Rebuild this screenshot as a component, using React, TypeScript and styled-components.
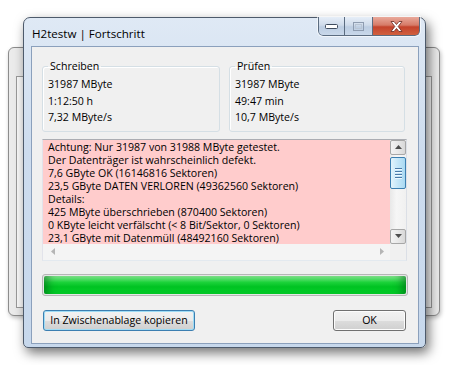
import styled, { createGlobalStyle } from "styled-components";

const Global = createGlobalStyle`
	html, body {
		margin: 0;
		background: #ffffff;
	}
	body {
		width: 454px;
		height: 365px;
		overflow: hidden;
		font-family: "Open Sans", "Noto Sans", sans-serif;
		font-size: 10.6px;
		color: #000;
	}
`;

const Desktop = styled.div`
	position: relative;
	width: 454px;
	height: 365px;
`;

// window of the main app, sits behind the dialog
const BackWindow = styled.div`
	position: absolute;
	left: 8px;
	top: 47px;
	width: 432px;
	height: 269px;
	box-sizing: border-box;
	border: 1px solid #8c8c8c;
	border-radius: 6px;
	background: #ebebeb;
	padding: 28px 7px 7px;
	box-shadow: 1px 2px 4px rgba(0, 0, 0, 0.25);
`;

const BackClient = styled.div`
	height: 100%;
	box-sizing: border-box;
	border: 1px solid #9a9a9a;
	background: #fafafa;
`;

const Window = styled.div`
	position: absolute;
	left: 23px;
	top: 17px;
	width: 403px;
	height: 331px;
	box-sizing: border-box;
	display: flex;
	flex-direction: column;
	border: 1px solid #4d5a6b;
	border-radius: 7px 7px 5px 5px;
	background: linear-gradient(#dfe9f5, #cddcee 40%, #c7d8ec);
	padding: 0 6px 6px 7px;
	box-shadow: 3px 5px 12px rgba(0, 0, 0, 0.55);
`;

const TitleBar = styled.div`
	position: relative;
	height: 28px;
	flex: none;
	display: flex;
	align-items: center;
	padding: 3px 0 0 1px;
	box-sizing: border-box;
	font-size: 11.6px;
	color: #000;
`;

const Caption = styled.div`
	display: flex;
	position: absolute;
	right: -1px;
	top: -1px;
	height: 19px;
	border-radius: 0 0 5px 5px;
	box-shadow: 0 0 0 1px rgba(255, 255, 255, 0.6);
	overflow: hidden;
`;

const CaptionButton = styled.div<{ $w: number; $close?: boolean }>`
	width: ${(p) => p.$w}px;
	height: 100%;
	box-sizing: border-box;
	display: flex;
	align-items: center;
	justify-content: center;
	border: 1px solid #5b6c80;
	border-top: none;
	margin-left: -1px;
	background: ${(p) =>
		p.$close
			? "linear-gradient(#e9a99b, #d67b68 45%, #c4432c 55%, #d0603f)"
			: "linear-gradient(#e6eef8, #cfdbea 45%, #bccde2 55%, #c9d8ea)"};
	&:first-child {
		border-bottom-left-radius: 5px;
		margin-left: 0;
	}
	&:last-child {
		border-bottom-right-radius: 5px;
	}
`;

const Client = styled.div`
	flex: 1;
	display: flex;
	flex-direction: column;
	box-sizing: border-box;
	border: 1px solid #8ba0bc;
	background: #f0f0f0;
	padding: 12px 11px 12px 10px;
`;

const Groups = styled.div`
	display: grid;
	grid-template-columns: 178px 176px;
	column-gap: 9px;
`;

const Group = styled.fieldset`
	margin: 0;
	padding: 2px 5px 5px;
	border: 1px solid #d5dfe5;
	border-radius: 3px;
	box-shadow: inset 1px 1px 0 #fff;
	min-width: 0;
`;

const Legend = styled.legend`
	padding: 0 2px;
	margin-left: 0;
	line-height: 15px;
`;

const Value = styled.div`
	line-height: 16.5px;
	white-space: nowrap;
`;

const LogBox = styled.div`
	margin-top: 7px;
	height: 122px;
	box-sizing: border-box;
	display: grid;
	grid-template-columns: 1fr 16px;
	grid-template-rows: 1fr 16px;
	border: 1px solid #abadb3;
	border-color: #abadb3 #dbdfe6 #e3e9ef #e2e3ea;
	background: #ffcccc;
`;

const LogText = styled.div`
	padding: 1px 0 0 5px;
	line-height: 13px;
	white-space: nowrap;
	overflow: hidden;
`;

const VScroll = styled.div`
	display: flex;
	flex-direction: column;
	background: linear-gradient(90deg, #e8e8e8, #f6f6f6 40%, #f0f0f0);
`;

const HScroll = styled.div`
	grid-column: 1 / 2;
	display: flex;
	align-items: center;
	justify-content: space-between;
	padding: 0 6px 0 8px;
	background: #f4f4f4;
`;

const Corner = styled.div`
	background: #f0f0f0;
`;

const ArrowButton = styled.div`
	height: 15px;
	flex: none;
	box-sizing: border-box;
	display: flex;
	align-items: center;
	justify-content: center;
	border: 1px solid #a7a7a7;
	border-radius: 2px;
	background: linear-gradient(90deg, #f3f3f3, #e8e8e8 50%, #d8d8d8);
`;

const Thumb = styled.div`
	margin-top: 2px;
	height: 32px;
	box-sizing: border-box;
	display: flex;
	flex-direction: column;
	align-items: center;
	justify-content: center;
	gap: 2px;
	border: 1px solid #3c7fb1;
	border-radius: 2px;
	background: linear-gradient(90deg, #e3f4fc, #c4e6f8 50%, #a9d9f2);
`;

const Grip = styled.div`
	width: 7px;
	height: 1px;
	background: #4a7aa8;
	box-shadow: 0 1px 0 #eef8ff;
`;

const Track = styled.div`
	flex: 1;
`;

const Progress = styled.div`
	margin-top: 13px;
	margin-right: -1px;
	height: 22px;
	box-sizing: border-box;
	border: 1px solid #b6b6b6;
	border-radius: 3px;
	padding: 1px;
	background: #e6e6e6;
`;

const ProgressFill = styled.div`
	height: 100%;
	border-radius: 2px;
	background: linear-gradient(#86e892, #1cd23a 35%, #00c322 60%, #05d02a);
	box-shadow: inset 10px 0 8px -6px rgba(0, 90, 20, 0.55),
		inset -10px 0 8px -6px rgba(0, 90, 20, 0.55);
`;

const ButtonRow = styled.div`
	margin-top: 14px;
	display: flex;
	justify-content: space-between;
	padding: 0 1px;
`;

const Button = styled.button<{ $focused?: boolean; $w: number }>`
	width: ${(p) => p.$w}px;
	height: 21px;
	padding: 0;
	font-family: inherit;
	font-size: 10.6px;
	color: #000;
	white-space: nowrap;
	border: 1px solid ${(p) => (p.$focused ? "#3c7fb1" : "#707070")};
	border-radius: 3px;
	background: linear-gradient(#f2f2f2, #ebebeb 50%, #dddddd 50%, #cfcfcf);
	box-shadow: inset 0 0 0 1px ${(p) => (p.$focused ? "#9fdcf5" : "#fcfcfc")};
`;

const Tri = ({ dir }: { dir: "up" | "down" | "left" | "right" }) => {
	const pts = {
		up: "0,4 7,4 3.5,0",
		down: "0,0 7,0 3.5,4",
		left: "4,0 4,7 0,3.5",
		right: "0,0 0,7 4,3.5",
	}[dir];
	const vertical = dir === "up" || dir === "down";
	return (
		<svg width={vertical ? 7 : 4} height={vertical ? 4 : 7}>
			<polygon points={pts} fill={vertical ? "#4d4d4d" : "#b5b5b5"} />
		</svg>
	);
};

const LOG_LINES = [
	"Achtung: Nur 31987 von 31988 MByte getestet.",
	"Der Datenträger ist wahrscheinlich defekt.",
	"7,6 GByte OK (16146816 Sektoren)",
	"23,5 GByte DATEN VERLOREN (49362560 Sektoren)",
	"Details:",
	"425 MByte überschrieben (870400 Sektoren)",
	"0 KByte leicht verfälscht (< 8 Bit/Sektor, 0 Sektoren)",
	"23,1 GByte mit Datenmüll (48492160 Sektoren)",
];

export default function App() {
	return (
		<Desktop>
			<Global />
			<BackWindow>
				<BackClient />
			</BackWindow>
			<Window>
				<TitleBar>
					H2testw | Fortschritt
					<Caption>
						<CaptionButton $w={27}>
							<svg width="13" height="5">
								<rect x="0.5" y="0.5" width="12" height="4" rx="1" fill="#fff" stroke="#3e4c5e" />
							</svg>
						</CaptionButton>
						<CaptionButton $w={29}>
							<svg width="11" height="9">
								<rect x="0.5" y="0.5" width="10" height="8" fill="none" stroke="#8e9cb0" />
								<rect x="2.5" y="2.5" width="6" height="4" fill="none" stroke="#b9c5d4" />
							</svg>
						</CaptionButton>
						<CaptionButton $w={48} $close>
							<svg width="13" height="11" viewBox="0 0 13 11">
								<path
									d="M1 0.5 L4 0.5 L6.5 3.5 L9 0.5 L12 0.5 L8.2 5.5 L12 10.5 L9 10.5 L6.5 7.5 L4 10.5 L1 10.5 L4.8 5.5 Z"
									fill="#fff"
									stroke="#6a2a22"
									strokeWidth="0.8"
								/>
							</svg>
						</CaptionButton>
					</Caption>
				</TitleBar>
				<Client>
					<Groups>
						<Group>
							<Legend>Schreiben</Legend>
							<Value>31987 MByte</Value>
							<Value>1:12:50 h</Value>
							<Value>7,32 MByte/s</Value>
						</Group>
						<Group>
							<Legend>Prüfen</Legend>
							<Value>31987 MByte</Value>
							<Value>49:47 min</Value>
							<Value>10,7 MByte/s</Value>
						</Group>
					</Groups>
					<LogBox>
						<LogText>
							{LOG_LINES.map((line) => (
								<div key={line}>{line}</div>
							))}
						</LogText>
						<VScroll>
							<ArrowButton>
								<Tri dir="up" />
							</ArrowButton>
							<Thumb>
								<Grip />
								<Grip />
								<Grip />
								<Grip />
							</Thumb>
							<Track />
							<ArrowButton>
								<Tri dir="down" />
							</ArrowButton>
						</VScroll>
						<HScroll>
							<Tri dir="left" />
							<Tri dir="right" />
						</HScroll>
						<Corner />
					</LogBox>
					<Progress>
						<ProgressFill />
					</Progress>
					<ButtonRow>
						<Button $focused $w={152}>
							In Zwischenablage kopieren
						</Button>
						<Button $w={73}>OK</Button>
					</ButtonRow>
				</Client>
			</Window>
		</Desktop>
	);
}
